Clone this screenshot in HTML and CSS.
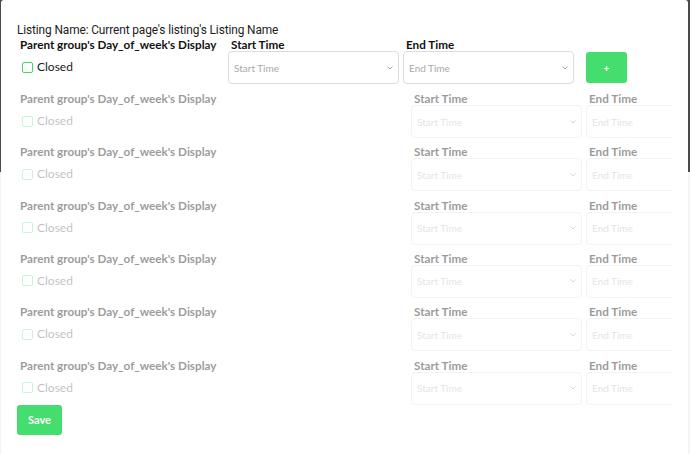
FILE: index.html
```html
<!DOCTYPE html>
<html>
<head>
<meta charset="utf-8">
<link rel="stylesheet" href="styles.css">
</head>
<body>
<div class="modal">
  <div class="listing">Listing Name: Current page's listing's Listing Name</div>
  <div class="rows">
    <div class="row row-active">
      <div class="day">
        <div class="label">Parent group's Day_of_week's Display</div>
        <div class="check"><span class="box"></span><span>Closed</span></div>
      </div>
      <div class="field">
        <div class="label">Start Time</div>
        <div class="select"><span>Start Time</span><svg class="chev" width="6" height="4" viewBox="0 0 6 4"><path d="M0.5 0.5 L3 3 L5.5 0.5" fill="none" stroke="#999" stroke-width="0.9"/></svg></div>
      </div>
      <div class="field">
        <div class="label">End Time</div>
        <div class="select"><span>End Time</span><svg class="chev" width="6" height="4" viewBox="0 0 6 4"><path d="M0.5 0.5 L3 3 L5.5 0.5" fill="none" stroke="#999" stroke-width="0.9"/></svg></div>
      </div>
      <button class="add">+</button>
    </div>

    <div class="row row-faded">
      <div class="day">
        <div class="label">Parent group's Day_of_week's Display</div>
        <div class="check"><span class="box"></span><span>Closed</span></div>
      </div>
      <div class="field">
        <div class="label">Start Time</div>
        <div class="select"><span>Start Time</span><svg class="chev" width="6" height="4" viewBox="0 0 6 4"><path d="M0.5 0.5 L3 3 L5.5 0.5" fill="none" stroke="#999" stroke-width="0.9"/></svg></div>
      </div>
      <div class="field">
        <div class="label">End Time</div>
        <div class="select"><span>End Time</span></div>
      </div>
    </div>

    <div class="row row-faded">
      <div class="day">
        <div class="label">Parent group's Day_of_week's Display</div>
        <div class="check"><span class="box"></span><span>Closed</span></div>
      </div>
      <div class="field">
        <div class="label">Start Time</div>
        <div class="select"><span>Start Time</span><svg class="chev" width="6" height="4" viewBox="0 0 6 4"><path d="M0.5 0.5 L3 3 L5.5 0.5" fill="none" stroke="#999" stroke-width="0.9"/></svg></div>
      </div>
      <div class="field">
        <div class="label">End Time</div>
        <div class="select"><span>End Time</span></div>
      </div>
    </div>

    <div class="row row-faded">
      <div class="day">
        <div class="label">Parent group's Day_of_week's Display</div>
        <div class="check"><span class="box"></span><span>Closed</span></div>
      </div>
      <div class="field">
        <div class="label">Start Time</div>
        <div class="select"><span>Start Time</span><svg class="chev" width="6" height="4" viewBox="0 0 6 4"><path d="M0.5 0.5 L3 3 L5.5 0.5" fill="none" stroke="#999" stroke-width="0.9"/></svg></div>
      </div>
      <div class="field">
        <div class="label">End Time</div>
        <div class="select"><span>End Time</span></div>
      </div>
    </div>

    <div class="row row-faded">
      <div class="day">
        <div class="label">Parent group's Day_of_week's Display</div>
        <div class="check"><span class="box"></span><span>Closed</span></div>
      </div>
      <div class="field">
        <div class="label">Start Time</div>
        <div class="select"><span>Start Time</span><svg class="chev" width="6" height="4" viewBox="0 0 6 4"><path d="M0.5 0.5 L3 3 L5.5 0.5" fill="none" stroke="#999" stroke-width="0.9"/></svg></div>
      </div>
      <div class="field">
        <div class="label">End Time</div>
        <div class="select"><span>End Time</span></div>
      </div>
    </div>

    <div class="row row-faded">
      <div class="day">
        <div class="label">Parent group's Day_of_week's Display</div>
        <div class="check"><span class="box"></span><span>Closed</span></div>
      </div>
      <div class="field">
        <div class="label">Start Time</div>
        <div class="select"><span>Start Time</span><svg class="chev" width="6" height="4" viewBox="0 0 6 4"><path d="M0.5 0.5 L3 3 L5.5 0.5" fill="none" stroke="#999" stroke-width="0.9"/></svg></div>
      </div>
      <div class="field">
        <div class="label">End Time</div>
        <div class="select"><span>End Time</span></div>
      </div>
    </div>

    <div class="row row-faded">
      <div class="day">
        <div class="label">Parent group's Day_of_week's Display</div>
        <div class="check"><span class="box"></span><span>Closed</span></div>
      </div>
      <div class="field">
        <div class="label">Start Time</div>
        <div class="select"><span>Start Time</span><svg class="chev" width="6" height="4" viewBox="0 0 6 4"><path d="M0.5 0.5 L3 3 L5.5 0.5" fill="none" stroke="#999" stroke-width="0.9"/></svg></div>
      </div>
      <div class="field">
        <div class="label">End Time</div>
        <div class="select"><span>End Time</span></div>
      </div>
    </div>
  </div>
  <button class="save">Save</button>
</div>
</body>
</html>
```

FILE: styles.css
```css
html, body {
  margin: 0;
  padding: 0;
}
body {
  width: 690px;
  height: 454px;
  overflow: hidden;
  background: linear-gradient(#4a4a4a 0, #4a4a4a 172px, #f4f4f4 172px);
  font-family: Lato, "Open Sans", sans-serif;
}
.modal {
  margin: 0 2px 0 1px;
  height: 454px;
  background: #fff;
  border-radius: 3px 3px 0 0;
  box-sizing: border-box;
  padding: 23px 16px 0 16px;
}
.listing {
  font-family: Roboto, "Liberation Sans", sans-serif;
  font-size: 11.9px;
  line-height: 14px;
  color: #1c1c1c;
  letter-spacing: -0.12px;
}
.rows {
  margin-top: 1px;
  overflow: hidden;
  display: flex;
  flex-direction: column;
}
.row {
  display: grid;
  column-gap: 4px;
  align-items: start;
}
.row-active {
  grid-template-columns: 207px 171px 171px 41px;
  margin-bottom: 8px;
}
.row-faded {
  grid-template-columns: 390px 171px 171px;
  height: 53.33px;
  opacity: 0.45;
}
.row-faded:last-child {
  height: 46px;
}
.label {
  font-weight: 700;
  font-size: 11.7px;
  line-height: 13px;
  color: #111;
  padding-left: 3px;
  white-space: nowrap;
}
.row-faded .label {
  color: #222;
}
.check {
  display: flex;
  align-items: center;
  gap: 4px;
  margin-top: 10px;
  padding-left: 5px;
  font-size: 12px;
  line-height: 12px;
  color: #1a1a1a;
}
.row-faded .check {
  opacity: 0.6;
}
.box {
  width: 9px;
  height: 9px;
  border: 1.6px solid #3fd96b;
  border-radius: 2px;
}
.select {
  box-sizing: border-box;
  height: 33px;
  border: 1px solid #dcdcdc;
  border-radius: 4px;
  display: flex;
  align-items: center;
  justify-content: space-between;
  padding: 0 5px 0 5px;
  font-size: 10px;
  color: #a9a9a9;
  background: #fff;
}
.row-faded .select {
  border-color: #e6e6e6;
  color: #c4c4c4;
}
.add {
  align-self: end;
  margin-left: 8px;
  margin-bottom: 1px;
  width: 41px;
  height: 31px;
  border: none;
  border-radius: 3px;
  background: #44dd6e;
  color: #fff;
  font-family: Lato, sans-serif;
  font-weight: 700;
  font-size: 10px;
  padding: 0;
}
.save {
  display: block;
  margin-top: 0;
  width: 45px;
  height: 30px;
  border: none;
  border-radius: 3px;
  background: #44dd6e;
  color: #fff;
  font-family: Lato, sans-serif;
  font-weight: 700;
  font-size: 11px;
  padding: 0;
}
```
